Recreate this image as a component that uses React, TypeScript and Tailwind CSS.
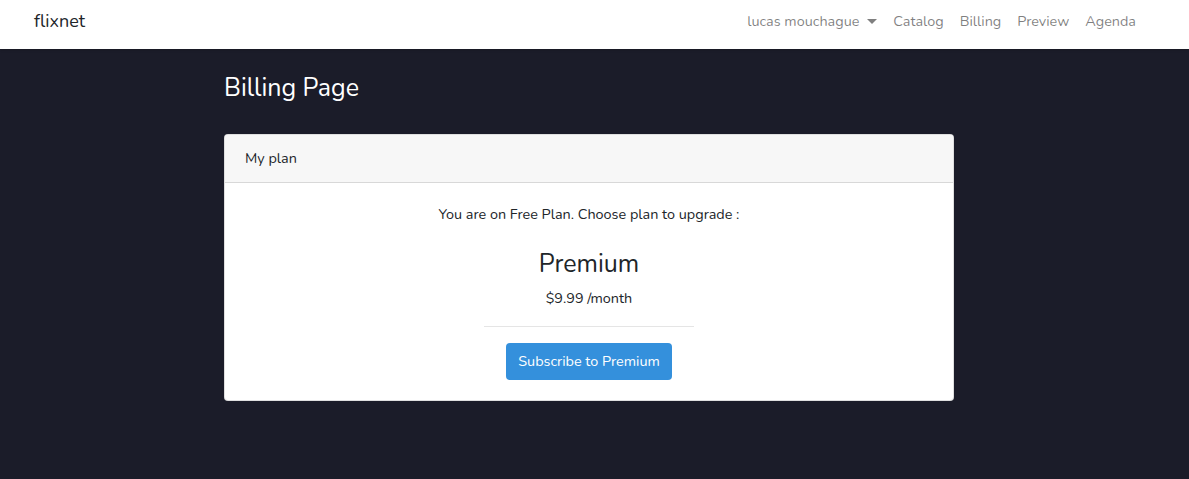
export default function App() {
    const links = ['Catalog', 'Billing', 'Preview', 'Agenda'];
    return (
        <div className="min-h-screen bg-[#1b1c29] font-['Nunito','Noto_Sans',sans-serif] text-[14.4px] text-[#212529]">
            {/* navbar */}
            <nav className="flex h-[49px] items-center justify-between bg-white pb-[6px] pl-[34px] pr-[45px] shadow-sm">
                <a className="text-[18px] text-[#212529]">flixnet</a>
                <ul className="flex items-center text-[rgba(0,0,0,0.5)]">
                    <li className="flex items-center px-2">
                        lucas mouchague
                        <span className="ml-[8px] inline-block h-0 w-0 border-x-[5px] border-t-[5px] border-x-transparent border-t-[rgba(0,0,0,0.5)]"></span>
                    </li>
                    {links.map((l) => (
                        <li key={l} className="px-2">
                            {l}
                        </li>
                    ))}
                </ul>
            </nav>

            <main className="ml-[224px] w-[730px] pt-[24px]">
                <h3 className="h-[30px] text-[25px] leading-[30px] text-white">
                    Billing Page
                </h3>
                <div className="mt-[31px] overflow-hidden rounded-[4px] border border-[rgba(0,0,0,0.125)] bg-white">
                    <div className="flex h-[48px] items-center border-b border-[rgba(0,0,0,0.125)] bg-[#f7f7f7] px-5">
                        My plan
                    </div>
                    <div className="flex flex-col items-center px-5 pb-[20px] pt-[20px]">
                        <p className="h-[22px] leading-[22px]">
                            You are on Free Plan. Choose plan to upgrade :
                        </p>
                        <h3 className="mt-[24px] h-[30px] text-[25px] leading-[30px]">
                            Premium
                        </h3>
                        <p className="mt-[8px] h-[22px] leading-[22px]">
                            $9.99 /month
                        </p>
                        <hr className="mt-[17px] w-[210px] border-t border-[rgba(0,0,0,0.1)]" />
                        <button className="mt-[16px] h-[37px] rounded-[4px] bg-[#3490dc] px-3 text-white">
                            Subscribe to Premium
                        </button>
                    </div>
                </div>
            </main>
        </div>
    );
}
